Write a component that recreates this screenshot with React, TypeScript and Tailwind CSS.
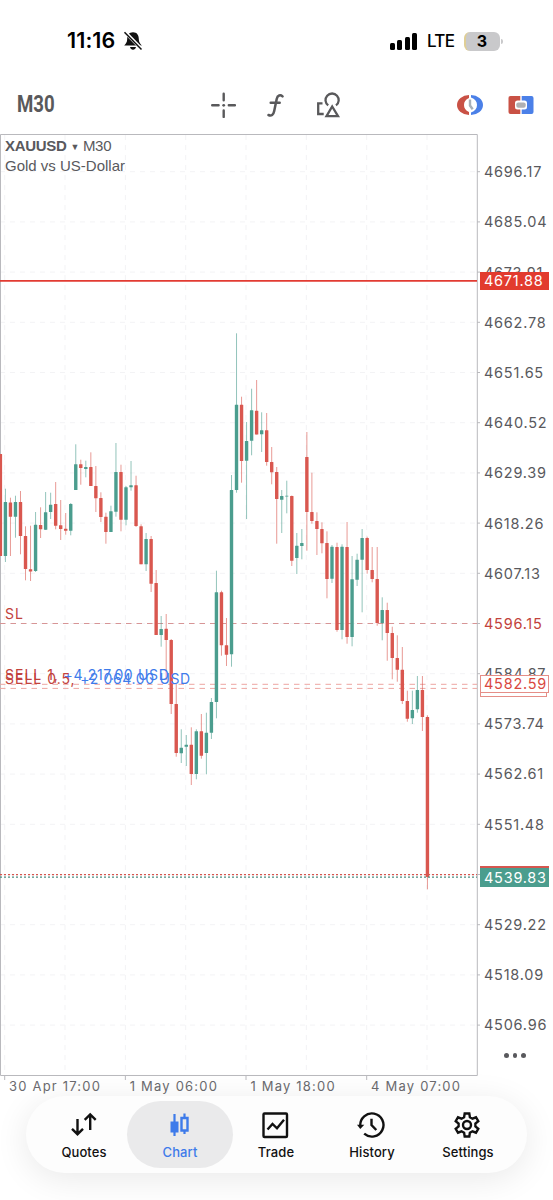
import type { ReactNode } from "react";

type Candle = [high: number, top: number, bottom: number, low: number, up?: 1];

const PITCH = 5.024;
const CHART_TOP = 134;

// high, body top, body bottom, low; trailing 1 marks a rising bar
const candles: Candle[] = [
  [454, 454, 556, 556],
  [488.7, 502, 556, 562, 1],
  [497.7, 502.5, 516.7, 556],
  [495.7, 502, 516.7, 537.7, 1],
  [491, 502, 536, 554.3],
  [526.3, 536, 569, 580.3],
  [525.7, 569.3, 571.5, 581],
  [512, 524.7, 571, 572, 1],
  [507.3, 525, 529.3, 538],
  [492, 512.3, 529.7, 530, 1],
  [492.7, 504.7, 512, 519, 1],
  [482, 504, 525.7, 529.3],
  [500, 525.3, 529, 540],
  [513, 528.8, 530.8, 534.7],
  [503, 504, 530.7, 535.3, 1],
  [444.3, 464.3, 490, 490, 1],
  [459.7, 464.3, 468, 484.7],
  [460.7, 467, 469, 477.3, 1],
  [452.3, 467, 486, 486],
  [466, 486, 498.3, 512],
  [492.3, 498, 517, 522],
  [512.7, 516.7, 532, 543.7],
  [505.7, 511.3, 532, 532, 1],
  [443, 472, 511.7, 516.7, 1],
  [464.7, 472, 519.7, 531.3],
  [486, 487.3, 519.7, 525.3, 1],
  [461, 485.3, 487.3, 490.7, 1],
  [475.7, 485.3, 526, 527],
  [524.3, 526.3, 564.3, 564.3],
  [533, 539, 564.3, 571, 1],
  [536, 539, 583.7, 592],
  [570, 583, 635, 635],
  [616, 629, 635, 646.7, 1],
  [614, 628.7, 640, 680],
  [639, 640, 704, 714],
  [684, 704, 753, 756.7],
  [729.3, 747.7, 753.3, 763, 1],
  [735, 744.7, 746.7, 766, 1],
  [727.3, 744.7, 774, 785],
  [729.3, 731.3, 774, 779.3, 1],
  [714, 731.3, 755.7, 758.7],
  [712.7, 732.7, 753, 774.3, 1],
  [698, 702, 732.7, 739, 1],
  [570.7, 592.3, 702, 718.3, 1],
  [590.7, 592.3, 645.3, 655.7],
  [618, 645.3, 654.7, 666],
  [475, 490, 654.3, 666.7, 1],
  [333.3, 404.7, 490, 492.7, 1],
  [396.7, 404.7, 461, 482.7],
  [422, 441, 460.7, 519, 1],
  [388.7, 410.3, 440.7, 455.3, 1],
  [380, 410.7, 434.5, 434.5],
  [412.3, 430.3, 434.3, 452, 1],
  [413, 430.3, 462, 465.7],
  [447, 462, 472.3, 484.3],
  [467, 472, 499, 543.7],
  [490, 496, 499.7, 533, 1],
  [480.7, 495.7, 496.4, 513.3, 1],
  [495.5, 496, 560.7, 566],
  [533, 545.7, 558, 574, 1],
  [529, 543, 546, 559.3, 1],
  [432, 457, 512, 550.7],
  [472.7, 512, 521, 523.7],
  [512.3, 521, 529, 555],
  [522.3, 529, 543.3, 553.3],
  [531.3, 543, 579, 598.3],
  [545, 546.7, 578.7, 583, 1],
  [542.7, 547, 630, 631.7],
  [544.3, 546.7, 630, 639.3, 1],
  [522, 547, 637, 643.7],
  [556, 579.3, 637, 646.3, 1],
  [553.7, 559.7, 579.7, 586, 1],
  [529, 538, 559.7, 612.3, 1],
  [536.7, 538, 570, 573.7],
  [547, 570, 579, 582.3],
  [547, 579, 623, 625.7],
  [597.3, 610, 623, 640.3, 1],
  [602.7, 610, 633, 660.7],
  [626.7, 633, 658, 679.3],
  [635.3, 658, 669.7, 681.7],
  [647, 669.7, 701, 704],
  [690.7, 701, 718.7, 721.7],
  [690.7, 710, 718.3, 724, 1],
  [676, 690, 709.3, 712.7, 1],
  [676, 690, 717, 731],
  [715.3, 717, 877, 889.3],
];

// the blank row sits under the current price tag
const prices = [
  "4696.17", "4685.04", "4673.91", "4662.78", "4651.65", "4640.52", "4629.39", "4618.26", "4607.13",
  "4596.15", "4584.87", "4573.74", "4562.61", "4551.48", "", "4529.22", "4518.09", "4506.96",
];

const times = ["30 Apr 17:00", "1 May 06:00", "1 May 18:00", "4 May 07:00"];

const gridX = Array.from({ length: 8 }, (_, i) => 4.7 + i * 60.33);
const gridY = prices.map((_, i) => 171.7 + i * 50.2);

function CandleChart() {
  return (
    <svg width="480" height="946" viewBox={`0 ${CHART_TOP} 480 946`} className="block">
      <g stroke="#f3f3f5" strokeWidth="1" strokeDasharray="5 5">
        {gridX.map((x) => (
          <line key={x} x1={x} x2={x} y1="135" y2="1075" />
        ))}
        {gridY.map((y) => (
          <line key={y} x1="0" x2="477" y1={y} y2={y} />
        ))}
      </g>

      <path d="M0.5 1075.5V134.5H477.3V1075.5Z" fill="none" stroke="#b9b9bd" strokeWidth="1" />

      <g strokeWidth="1" strokeDasharray="5.5 5">
        <line x1="0" x2="477" y1="623.5" y2="623.5" stroke="#d79596" />
        <line x1="0" x2="477" y1="684.3" y2="684.3" stroke="#eda6a2" />
        <line x1="0" x2="477" y1="688.4" y2="688.4" stroke="#eda6a2" />
      </g>

      {candles.map(([high, top, bottom, low, up], i) => {
        const x = 0.4 + i * PITCH;
        return (
          <g key={i} fill={up ? "#4b9d8e" : "#d9574f"}>
            <rect x={x - 0.5} y={high} width="1" height={low - high} opacity="0.6" />
            <rect x={x - 1.7} y={top} width="3.4" height={bottom - top} rx="0.3" />
          </g>
        );
      })}

      <line x1="0" x2="477" y1="280.9" y2="280.9" stroke="#e23b32" strokeWidth="1.6" />
      <line x1="0" x2="477" y1="874.6" y2="874.6" stroke="#d5564f" strokeWidth="1.2" strokeDasharray="2 2" />
      <line x1="0" x2="477" y1="877.1" y2="877.1" stroke="#4b8d82" strokeWidth="1.2" strokeDasharray="2 2" />

      <g stroke="#b9b9bd" strokeWidth="1">
        {gridY.map((y) => (
          <line key={y} x1="477" x2="480" y1={y} y2={y} />
        ))}
        {gridX.filter((_, i) => i % 2 === 0).map((x) => (
          <line key={x} x1={x} x2={x} y1="1075" y2="1080" />
        ))}
      </g>
    </svg>
  );
}

function StatusBar() {
  return (
    <div className="flex h-[82px] items-center justify-between pl-[67px] pr-[50px] text-black">
      <div className="flex items-center">
        <span className="w-[54px] whitespace-nowrap text-[21.5px] font-semibold leading-none tracking-[0.1px]">11:16</span>
        <svg width="22" height="20" viewBox="0 0 22 20" className="ml-px">
          <path d="M11 1.2C7 1.2 5.2 4 5.2 8c0 3.4-1.4 4.6-3 6.600h17.600c-1.600-2-3-3.200-3-6.600 0-4-1.800-6.800-5.800-6.800ZM8 16h6c-.4 1.800-1.500 2.700-3 2.700S8.400 17.800 8 16Z" fill="#111" />
          <path d="M3 1 20 18.400" stroke="#fff" strokeWidth="3.400" />
          <path d="M2.500 1.200 19.500 18.600" stroke="#111" strokeWidth="1.500" />
        </svg>
      </div>
      <div className="flex items-center">
        <div className="flex h-[17px] items-end gap-[2.500px]">
          <i className="h-[7px] w-[5px] rounded-[1.5px] bg-black" />
          <i className="h-[10px] w-[5px] rounded-[1.5px] bg-black" />
          <i className="h-[13px] w-[5px] rounded-[1.5px] bg-black" />
          <i className="h-[17px] w-[5px] rounded-[1.5px] bg-black" />
        </div>
        <span className="ml-[10px] w-[28px] text-[17px] font-medium leading-none tracking-[-0.7px]">LTE</span>
        <div className="ml-[9px] flex h-[19px] w-[36px] items-center justify-center rounded-md border-l-2 border-[#dfce95] bg-[#c9c9cb] pr-0.5 text-base font-bold leading-none">3</div>
        <i className="ml-px h-[5px] w-[2px] rounded-r-full bg-[#c9c9cb]" />
      </div>
    </div>
  );
}

function Toolbar() {
  return (
    <div className="flex h-[52px] items-center pb-1.5 pl-[17px] pr-[18px] text-[#59595b]">
      <div className="w-[193px]">
        <span className="inline-block origin-left scale-x-[0.81] font-['Roboto'] text-[23px] font-bold leading-none">M30</span>
      </div>
      <svg width="26" height="26" viewBox="0 0 26 26" fill="none" stroke="currentColor" strokeWidth="2.400" strokeLinecap="round">
        <path d="M13.700 1.800v6.400M13.700 18.500v6.400M2.200 13.300h6.400M18.800 13.300H25" />
        <circle cx="13.700" cy="13.300" r="1.400" fill="currentColor" stroke="none" />
      </svg>
      <svg width="18" height="26" viewBox="0 0 18 26" className="ml-[30px]" fill="none" stroke="currentColor" strokeWidth="2.500" strokeLinecap="round">
        <path d="M16.500 4.400C14.500 2.500 11.500 3 10.700 7L8.200 19C7.500 22.800 5.300 24.300 2.500 23M4.700 10.800h9" />
      </svg>
      <svg width="26" height="26" viewBox="0 0 26 26" className="ml-[31px]" fill="none" stroke="currentColor" strokeWidth="2.300">
        <path d="M7.500 11.300H3.200V22h5.500" />
        <path d="M13.200 13.400A6.600 6.600 0 1 1 21 13.400" />
        <path d="M17.200 14.500 23 24.200H11.500Z" />
      </svg>
      <svg width="28" height="24" viewBox="0 0 28 24" className="ml-auto">
        <path d="M13 2A12 10 0 0 0 13 22V19C9.500 17.500 8 15 8 12s1.500-5.500 5-7Z" fill="#c95145" />
        <path d="M15 2A12 10 0 0 1 15 22V19.500C19 18 21 15.500 21 12s-2-6-6-7.500Z" fill="#4b80e8" />
        <path d="M14 6.500V12.500L16.700 16.200" fill="none" stroke="#a8b0b8" strokeWidth="2.400" />
      </svg>
      <svg width="26" height="20" viewBox="0 0 26 20" className="ml-6 mr-px">
        <path d="M2.500 1H12.300V5.500H9.500A2.500 2.500 0 0 0 7 8V12a2.500 2.500 0 0 0 2.500 2.500h2.800V19H2.500A2 2 0 0 1 .5 17V3a2 2 0 0 1 2-2Z" fill="#c95145" />
        <path d="M13.700 1h9.800a2 2 0 0 1 2 2v14a2 2 0 0 1-2 2h-9.800v-4.500h2.800A2.500 2.500 0 0 0 19 12V8a2.500 2.500 0 0 0-2.500-2.500h-2.800Z" fill="#4b80e8" />
        <rect x="8.300" y="7.400" width="9.400" height="5.300" rx="2" fill="#b0b0b2" />
      </svg>
    </div>
  );
}

function PriceAxis() {
  return (
    <div className="relative w-[73px] text-[14.500px] tracking-[0.75px] text-[#59595d]">
      <div className="flex flex-col pl-1 pt-[13px]">
        {prices.map((price, i) => (
          <span key={i} className={`flex h-[50.2px] items-center ${price === "4596.15" ? "text-[#c2423c]" : ""}`}>
            {price}
          </span>
        ))}
      </div>
      <div className="absolute left-0 top-[138px] flex h-[18px] w-[69px] items-center bg-[#e23b2e] pl-1 text-white">4671.88</div>
      <div className="absolute left-0 top-[545px] h-[18px] w-[67px] border border-[#e58e87] bg-white" />
      <div className="absolute left-0 top-[541px] flex h-[18px] w-[69px] items-center border border-[#e58e87] bg-white pl-[3px] text-[#d9483f]">4582.59</div>
      <div className="absolute left-0 top-[732px] h-[18px] w-[69px] bg-[#d5564f]" />
      <div className="absolute left-0 top-[734px] flex h-[19px] w-[69px] items-center bg-[#4b9d8e] pl-1 text-white">4539.83</div>
      <div className="absolute left-[24px] top-[919px] flex gap-1">
        <i className="size-[4.500px] rounded-full bg-[#59595d]" />
        <i className="size-[4.500px] rounded-full bg-[#59595d]" />
        <i className="size-[4.500px] rounded-full bg-[#59595d]" />
      </div>
    </div>
  );
}

function PositionLabel({ className, side, profit }: { className: string; side: string; profit?: string }) {
  return (
    <div className={`absolute left-[5px] whitespace-pre text-sm leading-4 tracking-[1px] text-[#c2423c] ${className}`}>
      {side}
      {profit && <span className="tracking-[0.65px] text-[#3e7bea]"> {profit}</span>}
    </div>
  );
}

function NavItem({ label, active, children }: { label: string; active?: boolean; children: ReactNode }) {
  return (
    <div
      className={`flex h-[67px] w-[106px] shrink-0 flex-col items-center rounded-full pt-2.5 ${
        active ? "bg-[#eaeaeb] text-[#3e7bea]" : "text-[#111]"
      }`}
    >
      <svg width="28" height="28" viewBox="0 0 28 28" className="mr-[1.500px]" fill="none" stroke="currentColor" strokeWidth="2.400">
        {children}
      </svg>
      <span className="mt-[5px] text-[13px] font-medium leading-4 tracking-[0.1px]">{label}</span>
    </div>
  );
}

function BottomNav() {
  return (
    <nav className="mx-auto flex h-[77px] w-[501px] items-center justify-center rounded-full bg-[#fdfdfd] shadow-[0_6px_34px_rgba(0,0,0,0.09)]">
      <div className="mr-px flex -space-x-[10px]">
        <NavItem label="Quotes">
          <path d="M8.500 8v15M3 17.800l5.500 5.400L14 17.800M21.200 19V3.500M15.700 8.900l5.500-5.400 5.500 5.400" />
        </NavItem>
        <NavItem label="Chart" active>
          <path d="M9.500 3v22M19.500 2.500v4M19.500 19.500v3.500" strokeWidth="2.200" />
          <path d="M5.500 10.500h8v11h-8Z" fill="currentColor" stroke="none" />
          <path d="M16.500 7h6v12.500h-6Z" />
        </NavItem>
        <NavItem label="Trade">
          <rect x="2.500" y="2.500" width="23.500" height="23.500" rx="1" />
          <path d="m6.500 18.500 5-5.500 4.500 4.300 7-8.500" />
        </NavItem>
        <NavItem label="History">
          <path d="M3.300 14.800A11.600 11.600 0 1 1 7.200 22.700" />
          <path d="m0 13.800 3.300 4.200 4-4.200Z" fill="currentColor" stroke="none" />
          <path d="M14.500 7.800V14l4.800 5" />
        </NavItem>
        <NavItem label="Settings">
          <path d="m11.700 2.500-.6 3.700-2.600 1.500L5 6.300 2.700 10.200l2.900 2.400v2.800l-2.900 2.400L5 21.700l3.500-1.400 2.600 1.500.6 3.700h4.600l.6-3.700 2.600-1.500 3.500 1.400 2.300-3.900-2.900-2.400v-2.800l2.900-2.400L23 6.300l-3.500 1.400-2.600-1.500-.6-3.700Z" />
          <circle cx="14" cy="14" r="4" />
        </NavItem>
      </div>
    </nav>
  );
}

export default function App() {
  return (
    <div className="flex h-[1200px] w-[553px] flex-col overflow-hidden bg-white font-['Inter',sans-serif]">
      <StatusBar />
      <Toolbar />
      <main className="flex h-[942px]">
        <div className="relative h-[942px] w-[480px]">
          <CandleChart />
          <div className="absolute left-[5px] top-[3px] font-['Liberation_Sans',sans-serif] text-[15px] leading-[18.500px] text-[#59595d]">
            <div className="tracking-[-0.3px]">
              <b>XAUUSD</b> <span className="inline-block align-[1px] text-[9px]">▼</span> M30
            </div>
            <div>Gold vs US-Dollar</div>
          </div>
          <PositionLabel className="top-[472px]" side="SL" />
          <PositionLabel className="top-[533px]" side="SELL 1," profit="+4 217.00 USD" />
          <PositionLabel className="top-[537px]" side="SELL 0.5," profit="+2 064.00 USD" />
        </div>
        <PriceAxis />
      </main>
      <div className="flex h-5 pl-[9px] pt-px text-[13px] leading-[18px] tracking-[1.200px] text-[#6b6b6f]">
        {times.map((time) => (
          <span key={time} className="w-[120.700px] shrink-0 whitespace-nowrap">{time}</span>
        ))}
      </div>
      <BottomNav />
    </div>
  );
}
